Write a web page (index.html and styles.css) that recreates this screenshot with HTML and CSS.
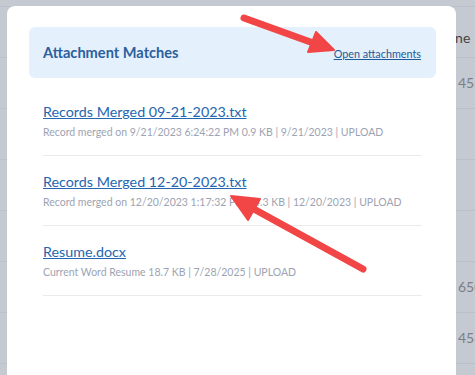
FILE: index.html
```html
<!DOCTYPE html>
<html lang="en">
<head>
    <meta charset="UTF-8">
    <meta name="viewport" content="width=device-width, initial-scale=1.0">
    <title>Attachment Matches</title>
    <link rel="stylesheet" href="styles.css">
</head>
<body>
    <!-- table behind the dialog -->
    <div class="backdrop">
        <div class="bg-row"><div class="bg-cell"></div><div class="bg-cell"></div><div class="bg-cell"></div><div class="bg-last bg-head"><span>Phone</span></div></div>
        <div class="bg-row"><div class="bg-cell"></div><div class="bg-cell"></div><div class="bg-cell"></div><div class="bg-last">456-2201</div></div>
        <div class="bg-row"><div class="bg-cell"></div><div class="bg-cell"></div><div class="bg-cell"></div><div class="bg-last"></div></div>
        <div class="bg-row"><div class="bg-cell"></div><div class="bg-cell"></div><div class="bg-cell"></div><div class="bg-last"></div></div>
        <div class="bg-row"><div class="bg-cell"></div><div class="bg-cell"></div><div class="bg-cell"></div><div class="bg-last"></div></div>
        <div class="bg-row"><div class="bg-cell"></div><div class="bg-cell"></div><div class="bg-cell"></div><div class="bg-last">650-1187</div></div>
        <div class="bg-row"><div class="bg-cell"></div><div class="bg-cell"></div><div class="bg-cell"></div><div class="bg-last">456-9932</div></div>
        <div class="bg-row"><div class="bg-cell"></div><div class="bg-cell"></div><div class="bg-cell"></div><div class="bg-last"></div></div>
    </div>

    <div class="modal">
        <div class="modal-header">
            <h2>Attachment Matches</h2>
            <a href="#" class="open-link">Open attachments</a>
        </div>

        <ul class="attachments">
            <li>
                <div class="name"><a href="#">Records Merged 09-21-2023.txt</a></div>
                <div class="meta">Record merged on 9/21/2023 6:24:22 PM 0.9 KB | 9/21/2023 | UPLOAD</div>
            </li>
            <li>
                <div class="name"><a href="#">Records Merged 12-20-2023.txt</a></div>
                <div class="meta">Record merged on 12/20/2023 1:17:32 PM 14.3 KB | 12/20/2023 | UPLOAD</div>
            </li>
            <li>
                <div class="name"><a href="#">Resume.docx</a></div>
                <div class="meta">Current Word Resume 18.7 KB | 7/28/2025 | UPLOAD</div>
            </li>
        </ul>
    </div>

    <!-- annotation arrows -->
    <svg class="arrows" width="475" height="375" viewBox="0 0 475 375">
        <line x1="244" y1="18" x2="316" y2="44" stroke="#f24545" stroke-width="7" stroke-linecap="round"/>
        <polygon points="334,50 308,52 316,32" fill="#f24545" stroke="#f24545" stroke-width="2" stroke-linejoin="round"/>
        <line x1="363" y1="269" x2="252" y2="208" stroke="#f24545" stroke-width="7" stroke-linecap="round"/>
        <polygon points="231,196 260,199 248,220" fill="#f24545" stroke="#f24545" stroke-width="2" stroke-linejoin="round"/>
    </svg>
</body>
</html>
```

FILE: styles.css
```css
body {
    font-family: Lato, 'Open Sans', sans-serif;
    margin: 0;
    background: #c5c9d1;
    width: 475px;
    height: 375px;
    overflow: hidden;
    position: relative;
}

.backdrop {
    padding-top: 6px;
}

.bg-row {
    display: flex;
    height: 50px;
    border-top: 1px solid #bbbfc8;
}

.bg-cell {
    flex-shrink: 0;
    width: 205px;
    border-right: 1px solid #bbbfc8;
}

.bg-cell:first-child {
    width: 213px;
}

.bg-cell:nth-child(3) {
    width: 37px;
    border-right: none;
}

.bg-last {
    flex: 1;
    min-width: 0;
    padding-left: 1px;
    line-height: 50px;
    font-size: 14px;
    color: #7c7f87;
    white-space: nowrap;
}

.bg-head {
    line-height: 62px;
    color: #444;
}

.bg-head span {
    margin-left: -27px;
}

.modal {
    position: absolute;
    top: 6px;
    left: 7px;
    width: 449px;
    height: 420px;
    background: #fff;
    border-radius: 8px;
    padding: 21px 20px 0 22px;
    box-sizing: border-box;
}

.modal-header {
    display: flex;
    justify-content: space-between;
    align-items: center;
    height: 51px;
    padding: 0 15px 0 14px;
    background: #e4f0fc;
    border-radius: 6px;
}

.modal-header h2 {
    margin: 0;
    font-size: 14.6px;
    font-weight: 700;
    color: #2b5f9e;
}

.open-link {
    font-size: 10.8px;
    color: #1f5a9a;
    text-decoration: underline;
    margin-top: 2px;
}

.attachments {
    list-style: none;
    margin: 8px 14px 0;
    padding: 0;
}

.attachments li {
    padding: 17px 0 16px;
    border-bottom: 1px solid #e8eaee;
}

.name {
    line-height: 18px;
    font-size: 14.3px;
}

.name a {
    color: #2466b0;
    text-decoration: underline;
}

.meta {
    margin-top: 4px;
    font-size: 10.5px;
    line-height: 14px;
    color: #9da3b2;
    white-space: nowrap;
}

.arrows {
    position: absolute;
    top: 0;
    left: 0;
}
```
